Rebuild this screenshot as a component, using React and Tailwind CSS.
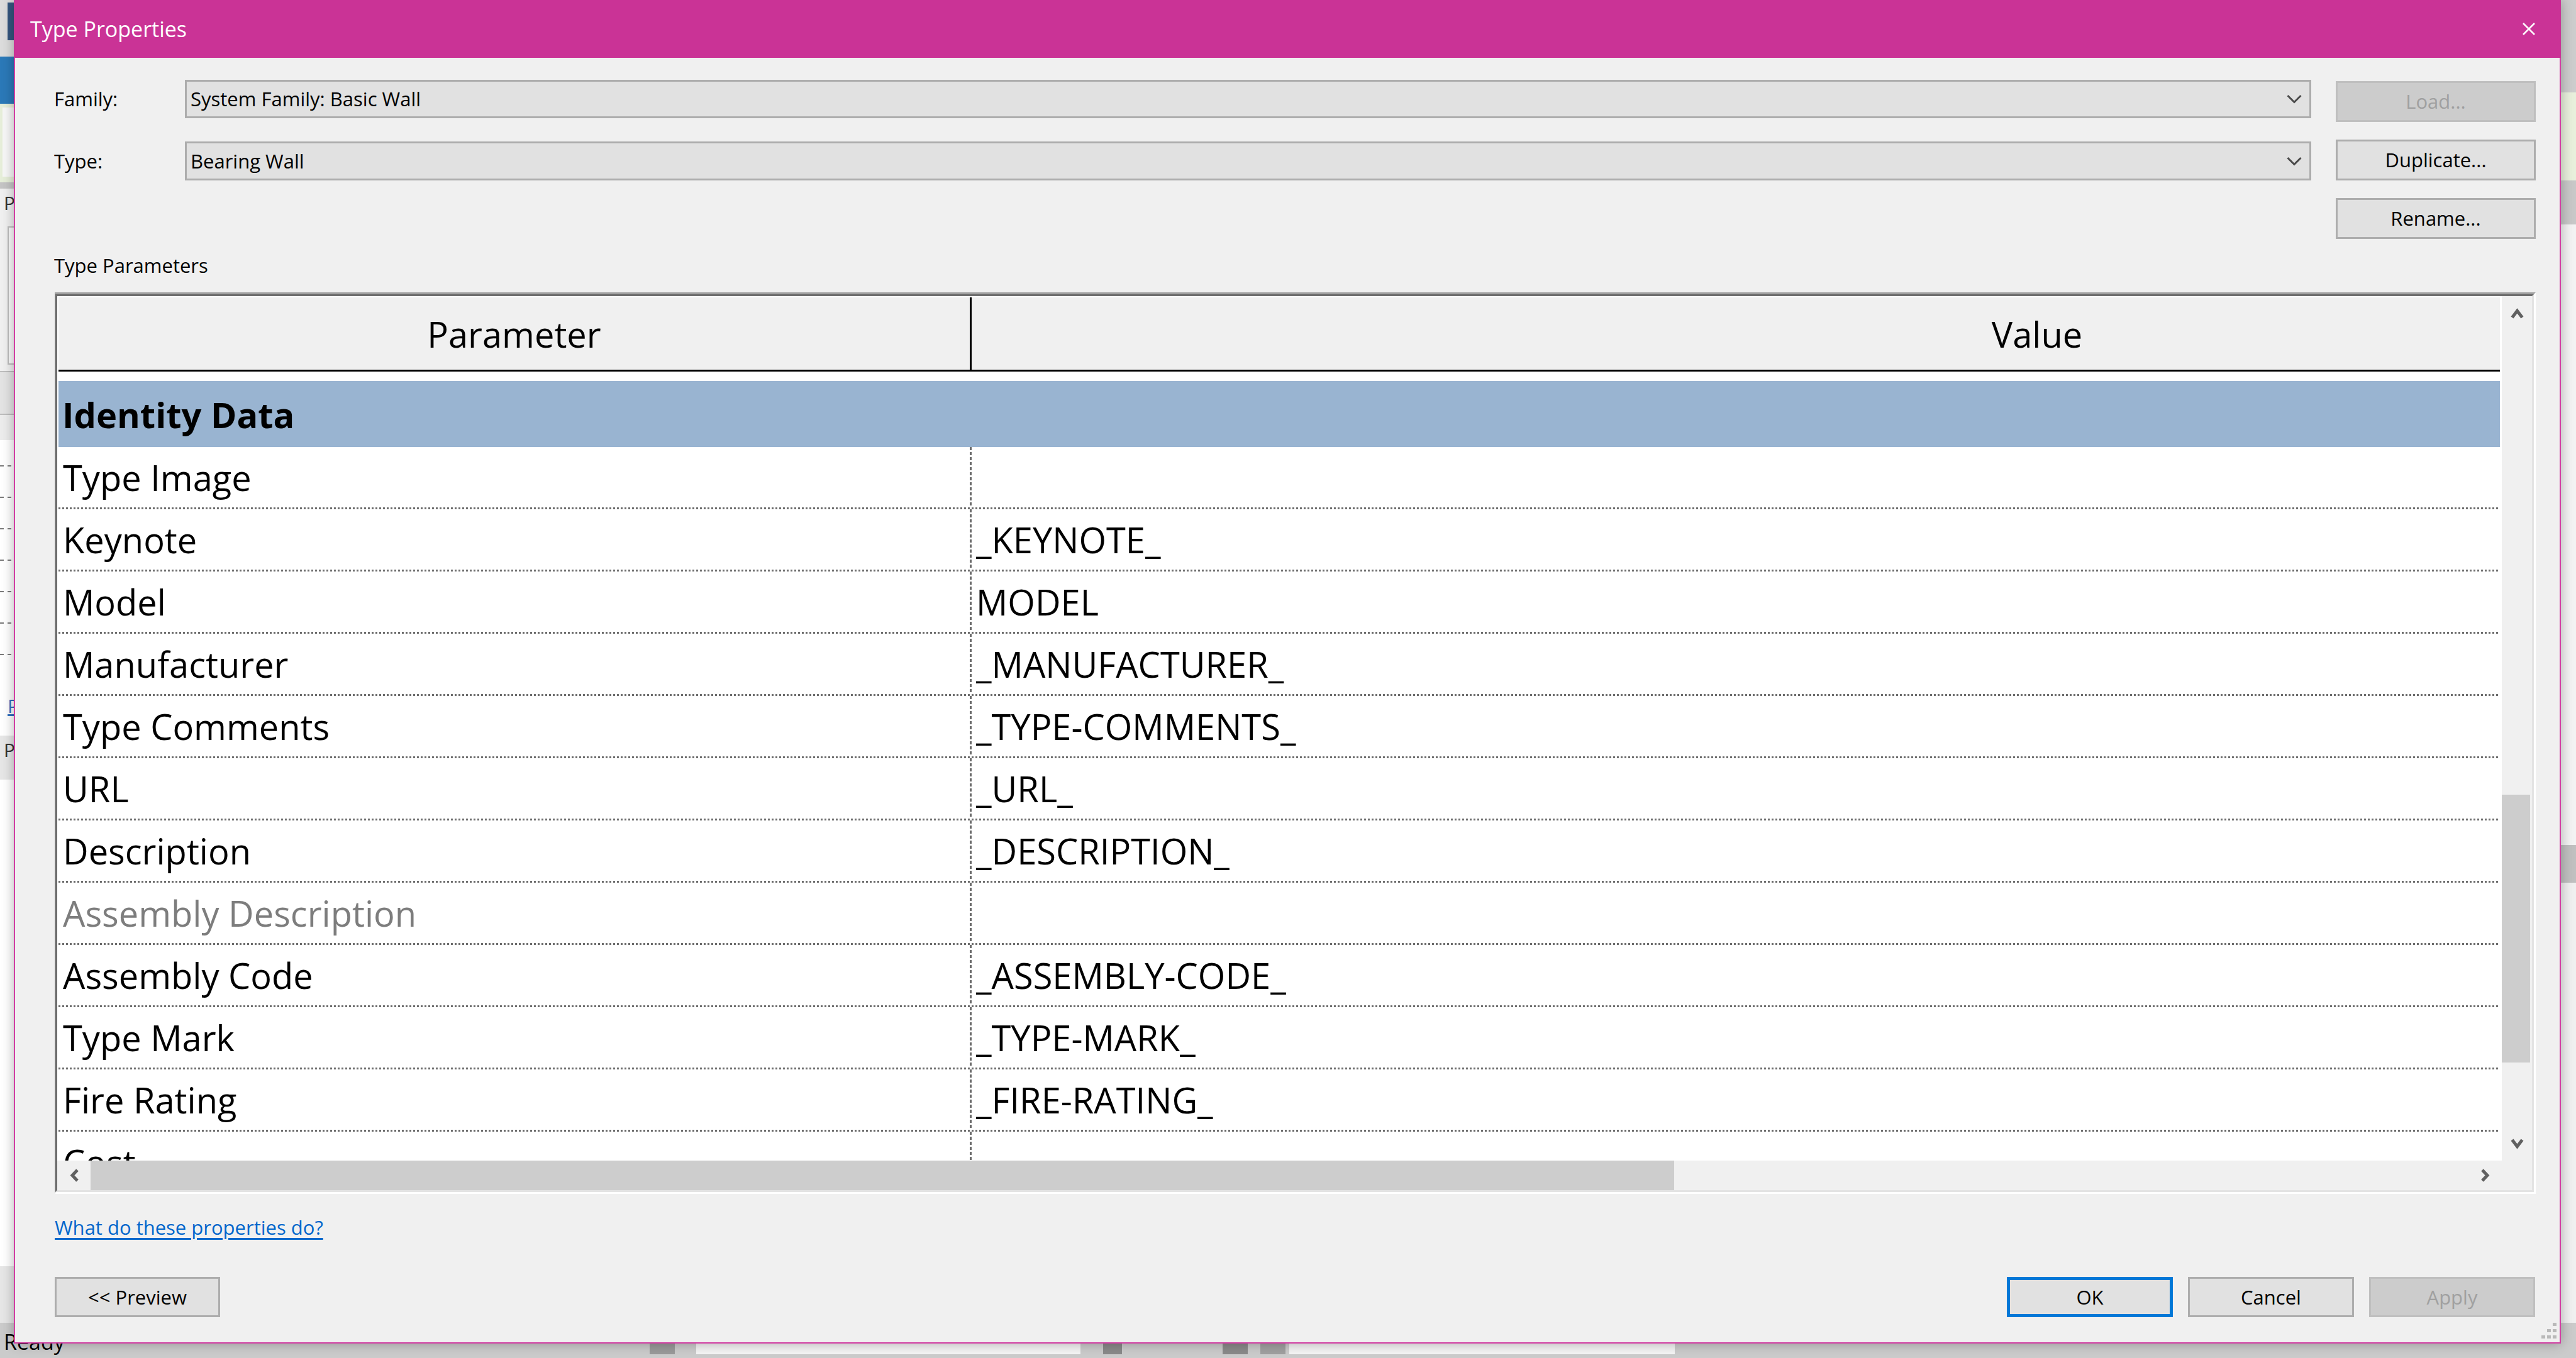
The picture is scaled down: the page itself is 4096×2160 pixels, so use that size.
import React from "react";

const rows = [
  ["Type Image", ""],
  ["Keynote", "_KEYNOTE_"],
  ["Model", "MODEL"],
  ["Manufacturer", "_MANUFACTURER_"],
  ["Type Comments", "_TYPE-COMMENTS_"],
  ["URL", "_URL_"],
  ["Description", "_DESCRIPTION_"],
  ["Assembly Description", "", true],
  ["Assembly Code", "_ASSEMBLY-CODE_"],
  ["Type Mark", "_TYPE-MARK_"],
  ["Fire Rating", "_FIRE-RATING_"],
  ["Cost", ""],
];

function Arrow({ dir }) {
  const common = {
    fill: "none",
    stroke: "#606060",
    strokeWidth: 5,
    strokeLinejoin: "miter",
    strokeLinecap: "butt",
  };
  if (dir === "up")
    return (
      <svg width="21" height="18" viewBox="0 0 21 18">
        <polyline points="2.5,16 10.5,5.5 18.5,16" {...common} />
      </svg>
    );
  if (dir === "down")
    return (
      <svg width="21" height="18" viewBox="0 0 21 18">
        <polyline points="2.5,2 10.5,12.5 18.5,2" {...common} />
      </svg>
    );
  if (dir === "left")
    return (
      <svg width="18" height="21" viewBox="0 0 18 21">
        <polyline points="14,2 6,10.5 14,19" {...common} />
      </svg>
    );
  return (
    <svg width="18" height="21" viewBox="0 0 18 21">
      <polyline points="4,2 12,10.5 4,19" {...common} />
    </svg>
  );
}

function ComboChevron() {
  return (
    <svg width="24" height="15" viewBox="0 0 24 15">
      <polyline
        points="1.5,2 12,12.5 22.5,2"
        fill="none"
        stroke="#4a4a4a"
        strokeWidth="3"
      />
    </svg>
  );
}

function Combo({ text }) {
  return (
    <div className="flex-1 h-full border-[3px] border-[#adadad] bg-[#e1e1e1] flex items-center justify-between pl-[6px] pr-[12px]">
      <span className="text-[31px] leading-[31px] text-black">{text}</span>
      <ComboChevron />
    </div>
  );
}

function Btn({ children, disabled, primary, className = "" }) {
  const base =
    "flex items-center justify-center text-[31px] leading-[31px] " + className;
  if (disabled)
    return (
      <div className={base + " border-[3px] border-[#bfbfbf] bg-[#cccccc] text-[#a0a0a0]"}>
        {children}
      </div>
    );
  if (primary)
    return (
      <div className={base + " border-[5px] border-[#0078d7] bg-[#e1e1e1] text-black"}>
        {children}
      </div>
    );
  return (
    <div className={base + " border-[3px] border-[#adadad] bg-[#e1e1e1] text-black"}>
      {children}
    </div>
  );
}

function AppBackground() {
  return (
    <div className="w-full h-full flex flex-col">
      <div className="flex-1 flex">
        <div className="w-[600px] flex flex-col bg-[#f0f0f0]">
          <div className="h-[90px] bg-[#dcdcdc] flex">
            <div className="ml-[12px] mt-[4px] w-[12px] h-[60px] bg-[#34557e]" />
          </div>
          <div className="h-[75px] bg-[#2b79b8]" />
          <div className="h-[125px] bg-[#e6eed9] pl-[4px] pt-[6px]">
            <div className="w-[40px] h-[110px] bg-[#f7f7f7]" />
          </div>
          <div className="h-[10px] bg-[#c4c4c4]" />
          <div className="h-[60px] bg-[#f0f0f0] pl-[6px] text-[30px] text-[#333]">P</div>
          <div className="h-[230px] bg-[#f0f0f0] pl-[12px]">
            <div className="w-[40px] h-[220px] bg-[#fafafa] border-2 border-[#bdbdbd]" />
          </div>
          <div className="h-[70px] bg-[#e3e3e3] border-y-2 border-[#bdbdbd]" />
          <div className="h-[40px] bg-[#ececec]" />
          <div className="h-[400px] bg-white flex flex-col gap-[48px] pt-[40px]">
            {[0, 1, 2, 3, 4, 5, 6].map((i) => (
              <div key={i} className="h-[2px] bg-[repeating-linear-gradient(90deg,#7a7a7a_0_6px,transparent_6px_12px)]" />
            ))}
          </div>
          <div className="h-[70px] bg-white pl-[12px] text-[30px] text-[#2f6fc0] underline">P</div>
          <div className="h-[70px] bg-[#e6e6e6] pl-[6px] text-[30px] text-[#333]">P</div>
          <div className="flex-1 bg-white" />
          <div className="h-[90px] bg-[#e6e6e6]" />
        </div>
        <div className="flex-1 bg-white" />
        <div className="w-[80px] flex flex-col">
          <div className="h-[147px] bg-[#cdcdcd]" />
          <div className="h-[140px] bg-[#e8f0dc]" />
          <div className="h-[70px] bg-[#c8c8c8]" />
          <div className="flex-1 bg-[#f3f3f3]" />
          <div className="h-[60px] bg-[#c0c0c0]" />
          <div className="h-[700px] bg-[#f0f0f0]" />
        </div>
      </div>
      <div className="h-[56px] bg-[#cbcbcb] flex items-end pb-[6px]">
        <span className="pl-[6px] text-[34px] leading-[40px] text-black">Ready</span>
        <div className="ml-[930px] w-[40px] h-[36px] bg-[#9a9a9a]" />
        <div className="ml-[34px] w-[611px] h-[40px] bg-[#f4f4f4]" />
        <div className="ml-[36px] w-[30px] h-[36px] bg-[#8a8a8a]" />
        <div className="ml-[160px] w-[40px] h-[36px] bg-[#8a8a8a]" />
        <div className="ml-[20px] w-[40px] h-[36px] bg-[#a0a0a0]" />
        <div className="ml-[6px] w-[613px] h-[40px] bg-[#f4f4f4]" />
      </div>
    </div>
  );
}

export default function App() {
  const dotted =
    "h-[3px] bg-[repeating-linear-gradient(90deg,#6d6d6d_0_3px,transparent_3px_6px)]";
  const dashedV =
    "w-[3px] bg-[repeating-linear-gradient(180deg,#6d6d6d_0_5px,transparent_5px_8px)]";

  return (
    <div className="relative w-[4096px] h-[2160px] overflow-hidden bg-[#d4d4d4] font-['Open_Sans',sans-serif]">
      <AppBackground />

      {/* Dialog window */}
      <div className="absolute left-[22px] top-0 w-[4050px] h-[2137px] flex flex-col bg-[#f0f0f0] border-x-2 border-b-2 border-[#d23ea3] shadow-[0_0_18px_rgba(0,0,0,0.3)]">
        {/* Title bar */}
        <div className="h-[92px] -mx-[2px] bg-[#ca3396] flex items-center justify-between pl-[26px] pr-[41px]">
          <span className="text-[34px] leading-[34px] text-white">Type Properties</span>
          <svg width="20" height="20" viewBox="0 0 20 20">
            <line x1="1" y1="1" x2="19" y2="19" stroke="white" strokeWidth="2.5" />
            <line x1="19" y1="1" x2="1" y2="19" stroke="white" strokeWidth="2.5" />
          </svg>
        </div>

        {/* Family / Type + buttons */}
        <div className="h-[308px] flex pl-[62px] pr-[38px]">
          <div className="flex-1 flex flex-col pt-[35px]">
            <div className="flex h-[61px] items-center">
              <span className="w-[208px] text-[31px] leading-[31px] text-black">Family:</span>
              <Combo text="System Family: Basic Wall" />
            </div>
            <div className="flex h-[62px] mt-[37px] items-center">
              <span className="w-[208px] text-[31px] leading-[31px] text-black">Type:</span>
              <Combo text="Bearing Wall" />
            </div>
          </div>
          <div className="w-[318px] ml-[39px] flex flex-col pt-[37px] gap-[28px]">
            <Btn disabled className="h-[65px]">Load...</Btn>
            <Btn className="h-[65px]">Duplicate...</Btn>
            <Btn className="h-[65px]">Rename...</Btn>
          </div>
        </div>

        {/* Type Parameters label */}
        <div className="h-[65px] pl-[62px] pt-[7px]">
          <span className="text-[31px] leading-[31px] text-black">Type Parameters</span>
        </div>

        {/* Table frame */}
        <div className="ml-[63px] mr-[38px] h-[1434px] border-t-[3px] border-l-[1px] border-t-[#a0a0a0] border-l-[#a0a0a0] border-b-[3px] border-r-[3px] border-b-white border-r-white">
          <div className="h-full border-t-[3px] border-l-[3px] border-t-[#6d6d6d] border-l-[#6d6d6d] border-b-[3px] border-r-[3px] border-b-[#e3e3e3] border-r-[#e3e3e3] grid grid-cols-[1fr_48px] grid-rows-[1fr_47px]">
            {/* Viewport */}
            <div className="bg-white pt-[2px] pl-[2px] pr-[3px] overflow-hidden min-w-0 min-h-0">
              <div className="h-full overflow-hidden">
                <div className="w-[4840px] flex flex-col">
                  {/* Header */}
                  <div className="flex h-[115px] bg-[#f0f0f0]">
                    <div className="w-[1449px] flex items-center justify-center text-[56px] leading-[56px] text-black">
                      Parameter
                    </div>
                    <div className="w-[3px] bg-black" />
                    <div className="w-[3388px] flex items-center justify-center text-[56px] leading-[56px] text-black">
                      Value
                    </div>
                  </div>
                  <div className="h-[3px] bg-black" />
                  <div className="h-[15px] bg-white" />
                  {/* Group band */}
                  <div className="h-[105px] bg-[#99b4d1] flex items-center pl-[6px] text-[56px] leading-[56px] font-bold text-black">
                    Identity Data
                  </div>
                  {rows.map(([name, value, grey]) => (
                    <div key={name} className="flex flex-col">
                      <div className="flex h-[96px]">
                        <div
                          className={
                            "w-[1449px] flex items-center pl-[7px] text-[56px] leading-[56px] whitespace-nowrap " +
                            (grey ? "text-[#7d7d7d]" : "text-black")
                          }
                        >
                          {name}
                        </div>
                        <div className={dashedV} />
                        <div className="w-[3388px] flex items-center pl-[7px] text-[56px] leading-[56px] text-black whitespace-nowrap">
                          {value}
                        </div>
                      </div>
                      <div className={dotted} />
                    </div>
                  ))}
                </div>
              </div>
            </div>

            {/* Vertical scrollbar */}
            <div className="bg-[#f0f0f0] flex flex-col min-h-0">
              <div className="h-[48px] flex justify-center pt-[18px]">
                <Arrow dir="up" />
              </div>
              <div className="h-[745px]" />
              <div className="h-[426px] w-[45px] bg-[#cdcdcd]" />
              <div className="flex-1" />
              <div className="h-[50px] flex justify-center pt-[15px]">
                <Arrow dir="down" />
              </div>
            </div>

            {/* Horizontal scrollbar */}
            <div className="bg-[#f0f0f0] flex min-w-0">
              <div className="w-[53px] flex items-center justify-center">
                <Arrow dir="left" />
              </div>
              <div className="w-[2518px] bg-[#cdcdcd]" />
              <div className="flex-1" />
              <div className="w-[53px] flex items-center justify-center">
                <Arrow dir="right" />
              </div>
            </div>
            <div className="bg-[#f0f0f0]" />
          </div>
        </div>

        {/* Help link */}
        <div className="ml-[63px] mt-[38px] h-[31px]">
          <span className="text-[31px] leading-[31px] text-[#0066cc] underline underline-offset-[5px]">
            What do these properties do?
          </span>
        </div>

        {/* Bottom buttons */}
        <div className="mt-[63px] h-[64px] flex pl-[63px] pr-[39px]">
          <Btn className="w-[263px] h-[64px]">&lt;&lt; Preview</Btn>
          <div className="flex-1" />
          <div className="flex gap-[24px]">
            <Btn primary className="w-[264px] h-[64px]">OK</Btn>
            <Btn className="w-[264px] h-[64px]">Cancel</Btn>
            <Btn disabled className="w-[264px] h-[64px]">Apply</Btn>
          </div>
        </div>

        {/* Resize grip */}
        <svg
          className="absolute right-[4px] bottom-[5px]"
          width="26"
          height="26"
          viewBox="0 0 26 26"
        >
          <rect x="19" y="0" width="6" height="5" fill="#b9b9b9" />
          <rect x="10" y="10" width="6" height="5" fill="#b9b9b9" />
          <rect x="19" y="10" width="6" height="5" fill="#b9b9b9" />
          <rect x="1" y="20" width="6" height="5" fill="#b9b9b9" />
          <rect x="10" y="20" width="6" height="5" fill="#b9b9b9" />
          <rect x="19" y="20" width="6" height="5" fill="#b9b9b9" />
        </svg>
      </div>
    </div>
  );
}
